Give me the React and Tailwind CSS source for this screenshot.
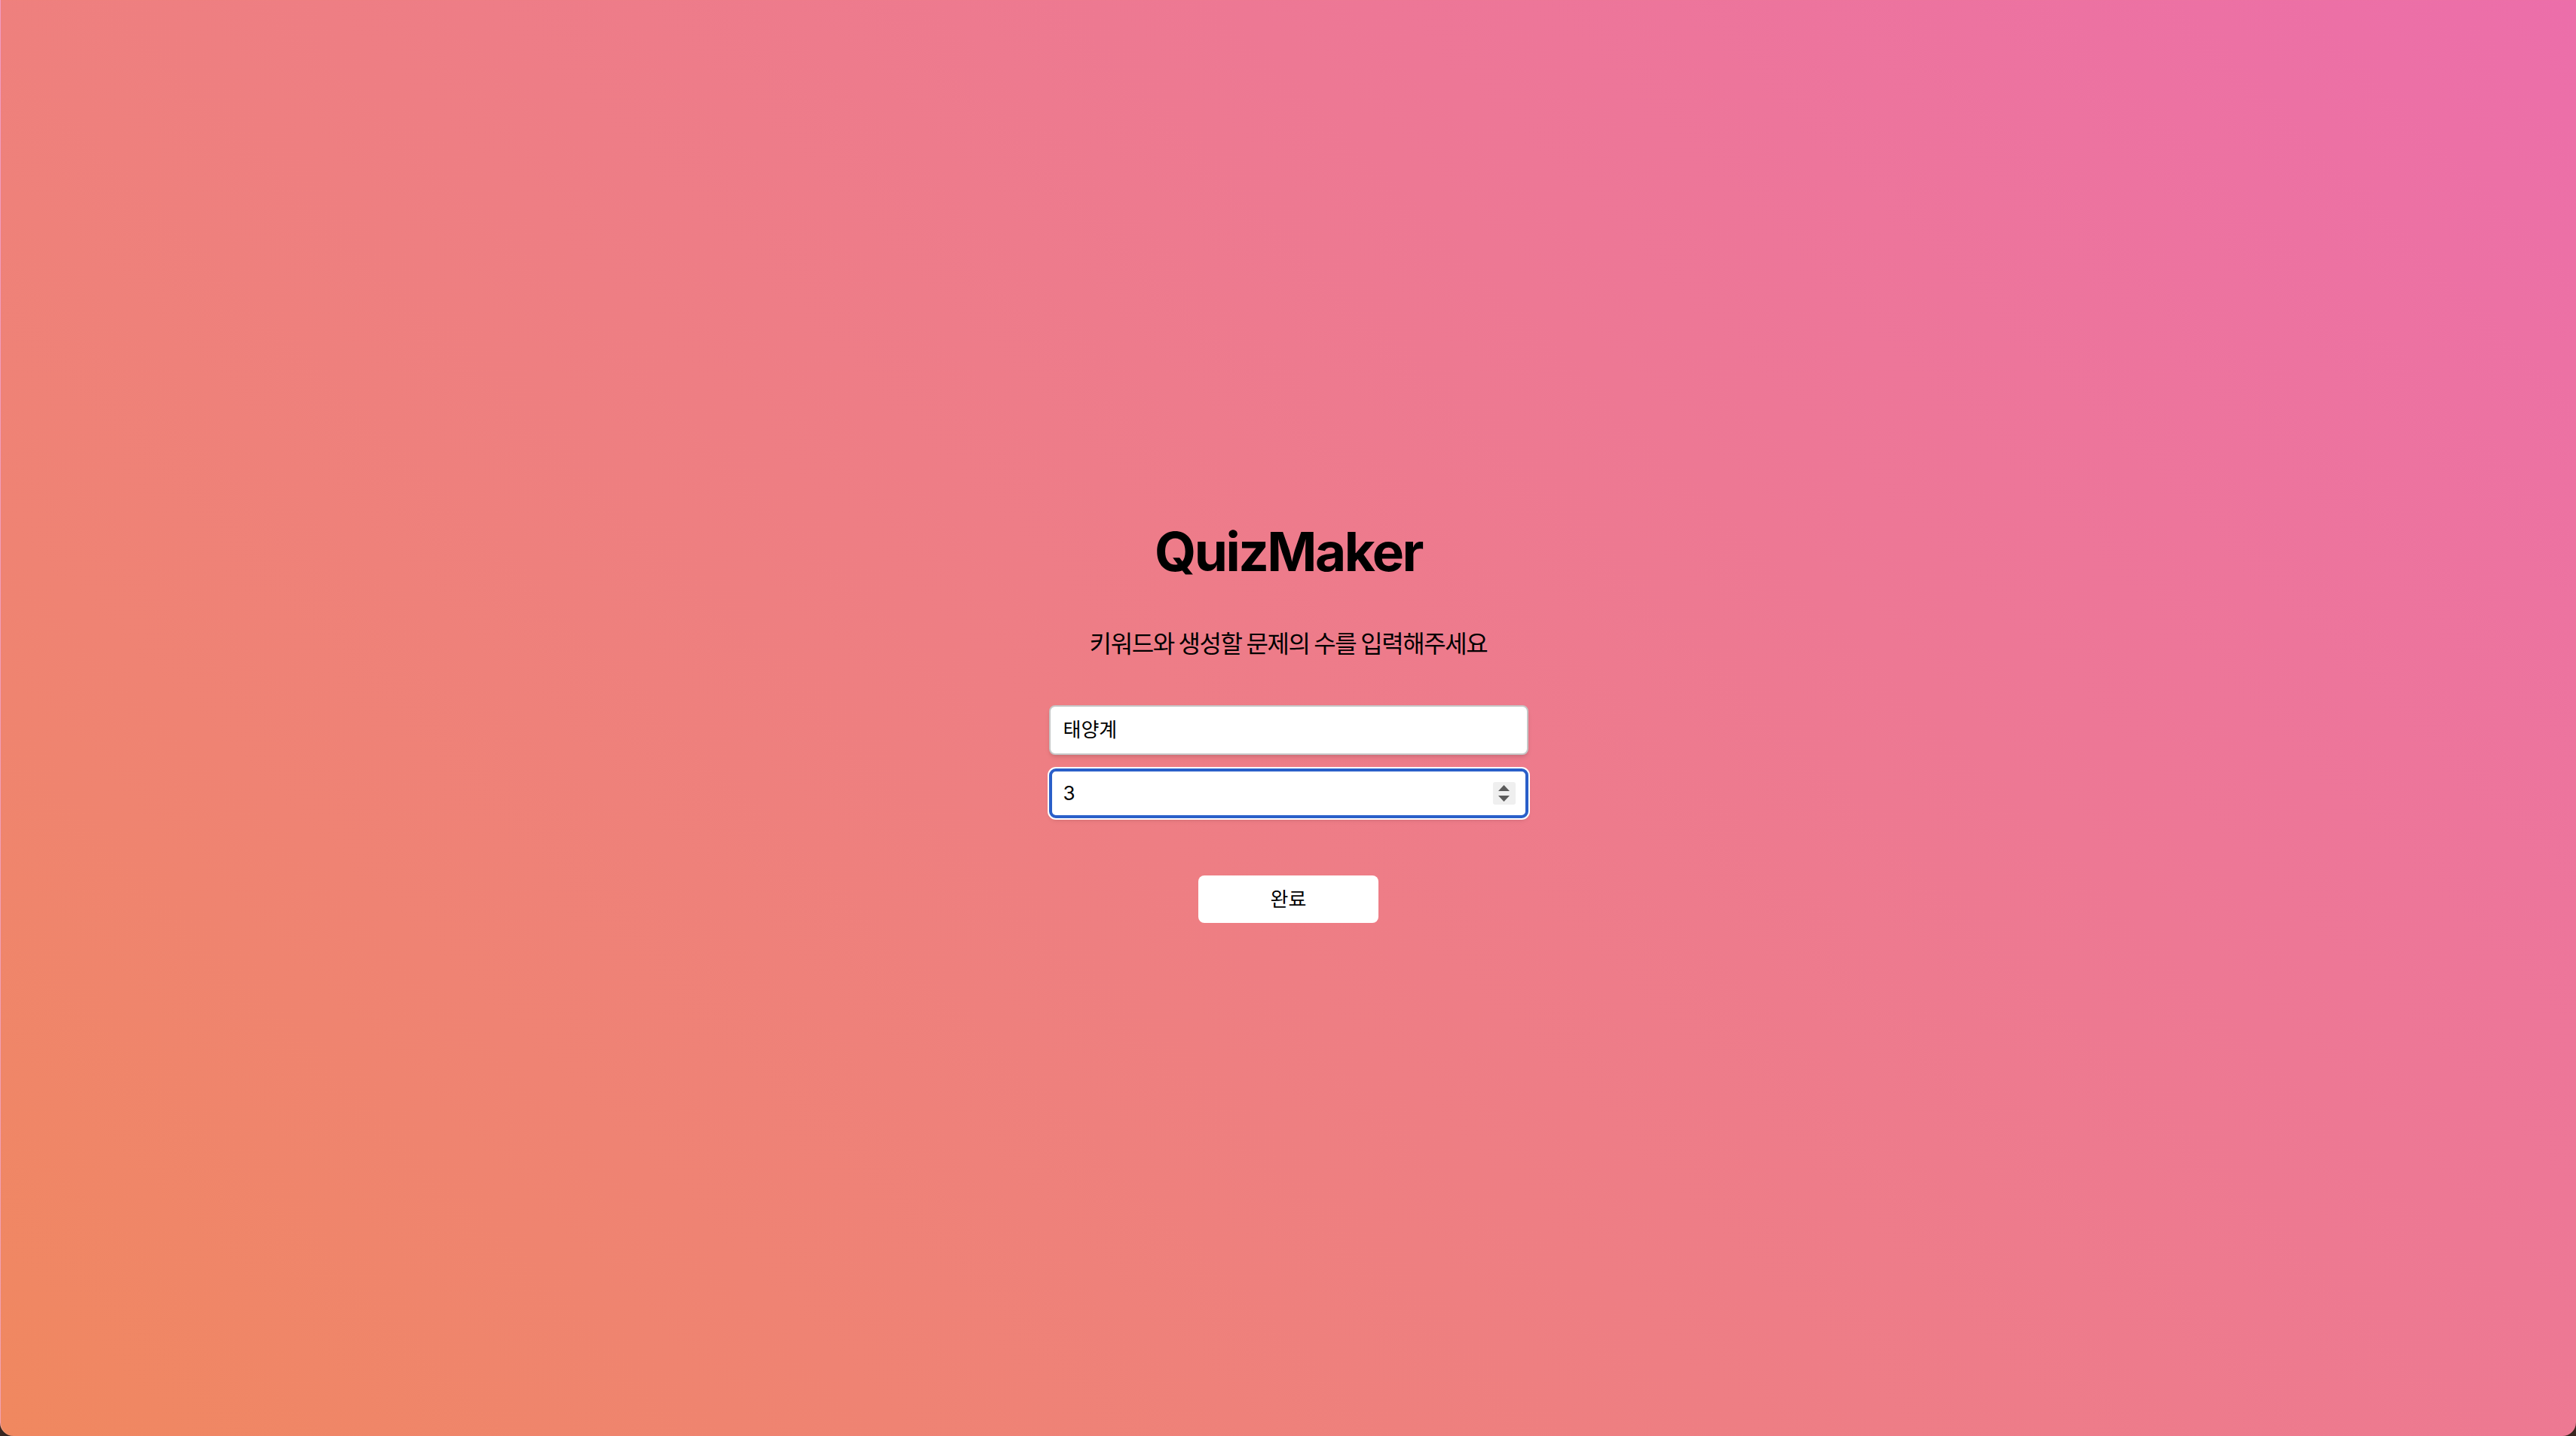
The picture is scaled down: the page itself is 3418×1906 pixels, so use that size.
import React, { useState } from 'react';

const korean = "font-['Noto_Sans_CJK_KR',sans-serif]";

const Spinner = () => (
  <div className="absolute right-[17px] top-1/2 -translate-y-1/2 w-[30px] h-[30px] rounded-[3px] bg-[#efefef] flex flex-col items-center justify-center gap-[6px]">
    <svg width="15" height="8" viewBox="0 0 15 8">
      <path d="M7.5 0 L15 8 L0 8 Z" fill="#5a5a5a" />
    </svg>
    <svg width="15" height="8" viewBox="0 0 15 8">
      <path d="M0 0 L15 0 L7.5 8 Z" fill="#5a5a5a" />
    </svg>
  </div>
);

export default function App() {
  const [keyword, setKeyword] = useState('태양계');
  const [count, setCount] = useState('3');

  return (
    <div className="bg-[#3a2620] min-h-screen">
      <div className="min-h-screen w-full rounded-b-[18px] border-l border-white/30 bg-linear-45 from-[#f0885f] to-[#ec6eaa] flex flex-col items-center justify-center pt-[11px]">
        <h1 className="font-['Inter',sans-serif] font-bold text-[71px] leading-[80px] text-black tracking-[-2.5px]">
          QuizMaker
        </h1>

        <p className={`${korean} text-[32px] leading-[48px] text-black mt-[56px] tracking-[-1.4px]`}>
          키워드와 생성할 문제의 수를 입력해주세요
        </p>

        <form
          className="flex flex-col gap-[18px] w-[636px] mt-[60px]"
          onSubmit={e => e.preventDefault()}
        >
          <input
            type="text"
            value={keyword}
            onChange={e => setKeyword(e.target.value)}
            className={`${korean} h-[66px] w-full rounded-[8px] border-2 border-[#c6c6c6] bg-white pl-[17px] pb-[5px] text-[26px] text-black shadow-md outline-none`}
          />
          <div className="relative">
            <input
              type="text"
              value={count}
              onChange={e => setCount(e.target.value)}
              className="font-['Inter',sans-serif] h-[66px] w-full rounded-[9px] border-4 border-[#2a5fc9] bg-white pl-[15px] pb-[2px] text-[26px] text-black shadow-md ring-2 ring-white outline-none"
            />
            <Spinner />
          </div>
        </form>

        <button
          type="button"
          className={`${korean} mt-[76px] w-[239px] h-[63px] rounded-[8px] bg-white pb-[5px] text-[26px] text-black`}
        >
          완료
        </button>
      </div>
    </div>
  );
}
